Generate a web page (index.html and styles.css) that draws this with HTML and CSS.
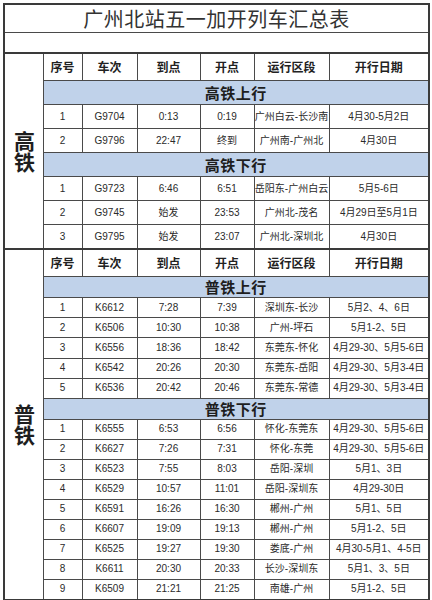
FILE: index.html
```html
<!DOCTYPE html>
<html lang="zh-CN">
<head>
<meta charset="utf-8">
<title>广州北站五一加开列车汇总表</title>
<link rel="stylesheet" href="styles.css">
</head>
<body>
<div class="sheet">
<table class="tbl">
  <colgroup>
    <col class="c-cat"><col class="c-no"><col class="c-train"><col class="c-arr"><col class="c-dep"><col class="c-route"><col class="c-date">
  </colgroup>
  <tbody>
    <tr class="r-title"><td colspan="7" class="title">广州北站五一加开列车汇总表</td></tr>
    <tr class="r-blank"><td colspan="7"></td></tr>

    <tr class="r-head r-head-hi block-top">
      <td rowspan="8" class="cat">高铁</td>
      <td>序号</td><td>车次</td><td>到点</td><td>开点</td><td>运行区段</td><td>开行日期</td>
    </tr>
    <tr class="r-sec r-sec-hi"><td colspan="6" class="sec">高铁上行</td></tr>
    <tr class="r-hi"><td>1</td><td>G9704</td><td>0:13</td><td>0:19</td><td>广州白云-长沙南</td><td>4月30-5月2日</td></tr>
    <tr class="r-hi"><td>2</td><td>G9796</td><td>22:47</td><td>终到</td><td>广州南-广州北</td><td>4月30日</td></tr>
    <tr class="r-sec r-sec-hi"><td colspan="6" class="sec">高铁下行</td></tr>
    <tr class="r-hi"><td>1</td><td>G9723</td><td>6:46</td><td>6:51</td><td>岳阳东-广州白云</td><td>5月5-6日</td></tr>
    <tr class="r-hi"><td>2</td><td>G9745</td><td>始发</td><td>23:53</td><td>广州北-茂名</td><td>4月29日至5月1日</td></tr>
    <tr class="r-hi"><td>3</td><td>G9795</td><td>始发</td><td>23:07</td><td>广州北-深圳北</td><td>4月30日</td></tr>

    <tr class="r-head r-head-pu block-top">
      <td rowspan="17" class="cat">普铁</td>
      <td>序号</td><td>车次</td><td>到点</td><td>开点</td><td>运行区段</td><td>开行日期</td>
    </tr>
    <tr class="r-sec r-sec-pu"><td colspan="6" class="sec">普铁上行</td></tr>
    <tr class="r-pu r-pu-up"><td>1</td><td>K6612</td><td>7:28</td><td>7:39</td><td>深圳东-长沙</td><td>5月2、4、6日</td></tr>
    <tr class="r-pu r-pu-up"><td>2</td><td>K6506</td><td>10:30</td><td>10:38</td><td>广州-坪石</td><td>5月1-2、5日</td></tr>
    <tr class="r-pu r-pu-up"><td>3</td><td>K6556</td><td>18:36</td><td>18:42</td><td>东莞东-怀化</td><td>4月29-30、5月5-6日</td></tr>
    <tr class="r-pu r-pu-up"><td>4</td><td>K6542</td><td>20:26</td><td>20:30</td><td>东莞东-岳阳</td><td>4月29-30、5月3-4日</td></tr>
    <tr class="r-pu r-pu-up"><td>5</td><td>K6536</td><td>20:42</td><td>20:46</td><td>东莞东-常德</td><td>4月29-30、5月3-4日</td></tr>
    <tr class="r-sec r-sec-pu"><td colspan="6" class="sec">普铁下行</td></tr>
    <tr class="r-pu"><td>1</td><td>K6555</td><td>6:53</td><td>6:56</td><td>怀化-东莞东</td><td>4月29-30、5月5-6日</td></tr>
    <tr class="r-pu"><td>2</td><td>K6627</td><td>7:26</td><td>7:31</td><td>怀化-东莞</td><td>4月29-30、5月5-6日</td></tr>
    <tr class="r-pu"><td>3</td><td>K6523</td><td>7:55</td><td>8:03</td><td>岳阳-深圳</td><td>5月1、3日</td></tr>
    <tr class="r-pu"><td>4</td><td>K6529</td><td>10:57</td><td>11:01</td><td>岳阳-深圳东</td><td>4月29-30日</td></tr>
    <tr class="r-pu"><td>5</td><td>K6591</td><td>16:26</td><td>16:30</td><td>郴州-广州</td><td>5月1、5日</td></tr>
    <tr class="r-pu"><td>6</td><td>K6607</td><td>19:09</td><td>19:13</td><td>郴州-广州</td><td>5月1-2、5日</td></tr>
    <tr class="r-pu"><td>7</td><td>K6525</td><td>19:27</td><td>19:30</td><td>娄底-广州</td><td>4月30-5月1、4-5日</td></tr>
    <tr class="r-pu"><td>8</td><td>K6611</td><td>20:30</td><td>20:33</td><td>长沙-深圳东</td><td>5月1、3、5日</td></tr>
    <tr class="r-pu"><td>9</td><td>K6509</td><td>21:21</td><td>21:25</td><td>南雄-广州</td><td>5月1-2、5日</td></tr>
  </tbody>
</table>
</div>
</body>
</html>
```

FILE: styles.css
```css
html, body {
  margin: 0;
  padding: 0;
  background: #ffffff;
}

.sheet {
  padding: 3px 0 0 3px;
}

.tbl {
  border-collapse: collapse;
  table-layout: fixed;
  width: 425px;
  border: 2px solid #3a3a3a;
  font-family: "Liberation Sans", "Noto Sans CJK SC", sans-serif;
  color: #2a2a2a;
}

.c-cat { width: 39px; }
.c-no { width: 39px; }
.c-train { width: 55px; }
.c-arr { width: 63px; }
.c-dep { width: 54px; }
.c-route { width: 75px; }
.c-date { width: 100px; }

.tbl td {
  border: 1px solid #4a4a4a;
  padding: 0;
  text-align: center;
  vertical-align: middle;
  font-size: 10px;
  line-height: 12px;
  white-space: nowrap;
  overflow: hidden;
}

.r-title td {
  height: 27px;
  font-family: "Noto Sans CJK SC", sans-serif;
  font-size: 20px;
  line-height: 24px;
  color: #333333;
  letter-spacing: 0.5px;
}

.r-blank td {
  height: 19px;
}

.block-top td {
  border-top: 2px solid #3a3a3a;
}

.r-head td {
  font-family: "Noto Sans CJK SC", sans-serif;
  font-weight: 700;
  font-size: 12px;
  color: #222222;
}

.r-head-hi td { height: 26px; }
.r-head-pu td { height: 26px; }

.tbl td.cat {
  font-family: "Noto Sans CJK SC", sans-serif;
  font-size: 21px;
  line-height: 21px;
  font-weight: 700;
  color: #1e1e1e;
  white-space: normal;
  padding: 0 9px;
  background: #ffffff;
}

.tbl td.sec {
  background: #c0d2ea;
  font-family: "Noto Sans CJK SC", sans-serif;
  font-weight: 700;
  font-size: 15px;
  color: #1e1e1e;
  letter-spacing: 0.5px;
}

.r-sec-hi td { height: 23px; }
.r-sec-pu td { height: 20px; }

.r-hi td { height: 23px; }
.r-pu td { height: 19px; }
.r-pu-up td { height: 19.2px; }
```
